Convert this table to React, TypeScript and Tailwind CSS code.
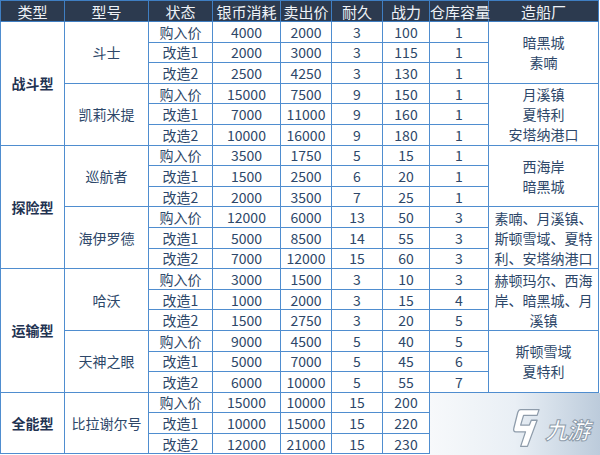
type Row = [string, number, number, number, number, number?];
type Ship = { name: string; rows: Row[]; yard?: string[]; yardText?: string };
type Group = { type: string; ships: Ship[] };

const groups: Group[] = [
  {
    type: "战斗型",
    ships: [
      {
        name: "斗士",
        rows: [
          ["购入价", 4000, 2000, 3, 100, 1],
          ["改造1", 2000, 3000, 3, 115, 1],
          ["改造2", 2500, 4250, 3, 130, 1],
        ],
        yard: ["暗黑城", "素喃"],
      },
      {
        name: "凯莉米提",
        rows: [
          ["购入价", 15000, 7500, 9, 150, 1],
          ["改造1", 7000, 11000, 9, 160, 1],
          ["改造2", 10000, 16000, 9, 180, 1],
        ],
        yard: ["月溪镇", "夏特利", "安塔纳港口"],
      },
    ],
  },
  {
    type: "探险型",
    ships: [
      {
        name: "巡航者",
        rows: [
          ["购入价", 3500, 1750, 5, 15, 1],
          ["改造1", 1500, 2500, 6, 20, 1],
          ["改造2", 2000, 3500, 7, 25, 1],
        ],
        yard: ["西海岸", "暗黑城"],
      },
      {
        name: "海伊罗德",
        rows: [
          ["购入价", 12000, 6000, 13, 50, 3],
          ["改造1", 5000, 8500, 14, 55, 3],
          ["改造2", 7000, 12000, 15, 60, 3],
        ],
        yardText: "素喃、月溪镇、斯顿雪域、夏特利、安塔纳港口",
      },
    ],
  },
  {
    type: "运输型",
    ships: [
      {
        name: "哈沃",
        rows: [
          ["购入价", 3000, 1500, 3, 10, 3],
          ["改造1", 1000, 2000, 3, 15, 4],
          ["改造2", 1500, 2750, 3, 20, 5],
        ],
        yardText: "赫顿玛尔、西海岸、暗黑城、月溪镇",
      },
      {
        name: "天神之眼",
        rows: [
          ["购入价", 9000, 4500, 5, 40, 5],
          ["改造1", 5000, 7000, 5, 45, 6],
          ["改造2", 6000, 10000, 5, 55, 7],
        ],
        yard: ["斯顿雪域", "夏特利"],
      },
    ],
  },
  {
    type: "全能型",
    ships: [
      {
        name: "比拉谢尔号",
        rows: [
          ["购入价", 15000, 10000, 15, 200],
          ["改造1", 10000, 15000, 15, 220],
          ["改造2", 12000, 21000, 15, 230],
        ],
      },
    ],
  },
];

const headers = ["类型", "型号", "状态", "银币消耗", "卖出价", "耐久", "战力", "仓库容量", "造船厂"];
const widths = [64, 84, 64, 68, 51, 51, 47, 59, 110];

const cell = "border border-[#4f8dcf] text-center align-middle p-0";

// 九游 watermark over the empty bottom-right cells
function Watermark() {
  return (
    <div className="absolute left-[430px] top-[393px] w-[170px] h-[62px] bg-gradient-to-r from-[#f7f9fb] via-[#e9eff5] to-[#bccbdb] flex items-center pl-[80px] gap-[4px]">
      <svg width="31" height="40" viewBox="0 0 32 40" className="mt-[8px] shrink-0">
        <path
          d="M11 1 L30 1 L28 7 L14 7 L11 17 L20 17 L22 12 L28 12 L18 39 L11 39 L16 24 L6 24 Q3 24 4 20 L8 4 Q9 1 11 1 Z"
          fill="#ffffff"
          stroke="#8e9cab"
          strokeWidth="1.3"
          strokeLinejoin="round"
        />
      </svg>
      <span className="mt-[10px] text-[23px] leading-none italic font-bold text-white tracking-[-1px] whitespace-nowrap [-webkit-text-stroke:1px_#8e9cab]">
        九游
      </span>
    </div>
  );
}

export default function App() {
  return (
    <div className="relative w-[600px] h-[455px] bg-white overflow-hidden font-['Noto_Sans_CJK_SC',sans-serif]">
      <table className="table-fixed border-collapse w-[598px] text-[14px] text-[#2d4769]">
        <colgroup>
          {widths.map((w, i) => (
            <col key={i} style={{ width: w }} />
          ))}
        </colgroup>
        <thead>
          <tr className="h-[21px] bg-[#2c3a4f]">
            {headers.map((h) => (
              <th key={h} className="border border-[#3f7ec2] text-center font-normal text-[15px] leading-none text-[#eef2f7] p-0 whitespace-nowrap">
                {h}
              </th>
            ))}
          </tr>
        </thead>
        <tbody>
          {groups.map((g) =>
            g.ships.map((s, si) =>
              s.rows.map((r, ri) => {
                const groupRows = g.ships.length * 3;
                return (
                  <tr key={g.type + s.name + ri} className="h-[20.6px]">
                    {si === 0 && ri === 0 && (
                      <td rowSpan={groupRows} className={`${cell} font-bold text-[#1f3352] leading-none`}>
                        {g.type}
                      </td>
                    )}
                    {ri === 0 && (
                      <td rowSpan={3} className={`${cell} leading-none whitespace-nowrap`}>
                        {s.name}
                      </td>
                    )}
                    <td className={`${cell} leading-none`}>{r[0]}</td>
                    <td className={`${cell} leading-none`}>{r[1]}</td>
                    <td className={`${cell} leading-none`}>{r[2]}</td>
                    <td className={`${cell} leading-none`}>{r[3]}</td>
                    <td className={`${cell} leading-none`}>{r[4]}</td>
                    {r[5] !== undefined ? (
                      <td className={`${cell} leading-none`}>{r[5]}</td>
                    ) : (
                      ri === 0 && <td rowSpan={3} colSpan={2} className="p-0" />
                    )}
                    {ri === 0 && (s.yard || s.yardText) && (
                      <td rowSpan={3} className={`${cell} leading-[20px] px-[3px]`}>
                        {s.yard ? s.yard.map((y) => <div key={y}>{y}</div>) : s.yardText}
                      </td>
                    )}
                  </tr>
                );
              })
            )
          )}
        </tbody>
      </table>
      <Watermark />
    </div>
  );
}
